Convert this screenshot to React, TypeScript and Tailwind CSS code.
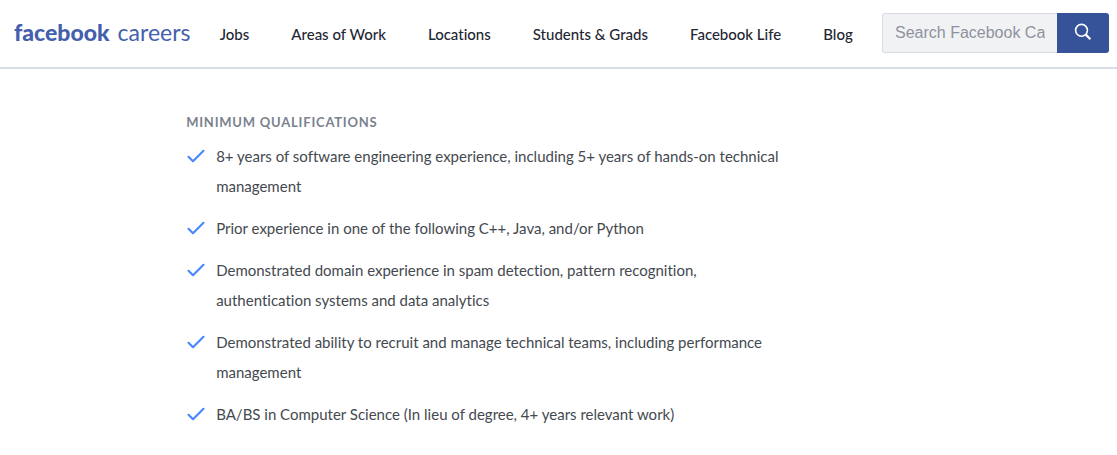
import React from 'react';

const navLinks = ['Jobs', 'Areas of Work', 'Locations', 'Students & Grads', 'Facebook Life', 'Blog'];

const qualifications = [
  '8+ years of software engineering experience, including 5+ years of hands-on technical management',
  'Prior experience in one of the following C++, Java, and/or Python',
  'Demonstrated domain experience in spam detection, pattern recognition, authentication systems and data analytics',
  'Demonstrated ability to recruit and manage technical teams, including performance management',
  'BA/BS in Computer Science (In lieu of degree, 4+ years relevant work)',
];

const CheckIcon: React.FC = () => (
  <svg className="w-5 h-[30px] shrink-0" viewBox="0 0 20 30" fill="none" aria-hidden="true">
    <path
      d="M2.5 15.8 L7 20.2 L17.5 9.8"
      stroke="#4a89fb"
      strokeWidth="2.2"
      strokeLinecap="round"
      strokeLinejoin="round"
    />
  </svg>
);

const SearchIcon: React.FC = () => (
  <svg className="w-[18px] h-[18px]" viewBox="0 0 18 18" fill="none" stroke="#ffffff" aria-hidden="true">
    <circle cx="7.5" cy="7.3" r="5.9" strokeWidth="1.6" />
    <path d="M11.8 11.6 L16.4 16.2" strokeWidth="2.2" />
  </svg>
);

const Header: React.FC = () => (
  <header className="flex items-center justify-between h-[69px] pl-3.5 pr-2 pb-px border-b-2 border-[#d8dde2]">
    <a href="#" className="flex items-baseline gap-2 pb-0.5 text-[#4460ad] whitespace-nowrap">
      <span className="text-[23px] font-black">facebook</span>
      <span className="text-[23px] font-normal">careers</span>
    </a>
    <nav className="flex gap-[42px] pt-0.5 text-[15px] font-medium text-[#1f2733] whitespace-nowrap">
      {navLinks.map((label) => (
        <a key={label} href="#">
          {label}
        </a>
      ))}
    </nav>
    <form className="flex w-[227px] h-10">
      <input
        type="text"
        aria-label="Search Facebook Careers"
        placeholder="Search Facebook Ca"
        className="flex-1 min-w-0 px-3 rounded-l-[3px] border border-r-0 border-[#d8dce2] bg-[#f1f2f4] font-['Liberation_Sans',Arial,sans-serif] text-base placeholder:text-[#8d939e] outline-none"
      />
      <button
        type="button"
        aria-label="Search"
        className="flex items-center justify-center w-[52px] pb-0.5 rounded-r-[3px] bg-[#365299]"
      >
        <SearchIcon />
      </button>
    </form>
  </header>
);

export default function App() {
  return (
    <div className="min-h-screen bg-white font-['Lato',sans-serif] [font-variant-ligatures:none]">
      <Header />
      <main className="pl-[calc(100%/6)] pt-[43px] pb-6">
        <section className="max-w-[600px]">
          <h2 className="mb-[9px] text-[13px] leading-5 font-bold tracking-[0.06em] text-[#7b828f] uppercase">
            Minimum Qualifications
          </h2>
          <ul className="flex flex-col gap-3">
            {qualifications.map((text) => (
              <li key={text} className="flex gap-2.5 text-[15px] leading-[30px] text-[#444950]">
                <CheckIcon />
                <span>{text}</span>
              </li>
            ))}
          </ul>
        </section>
      </main>
    </div>
  );
}
